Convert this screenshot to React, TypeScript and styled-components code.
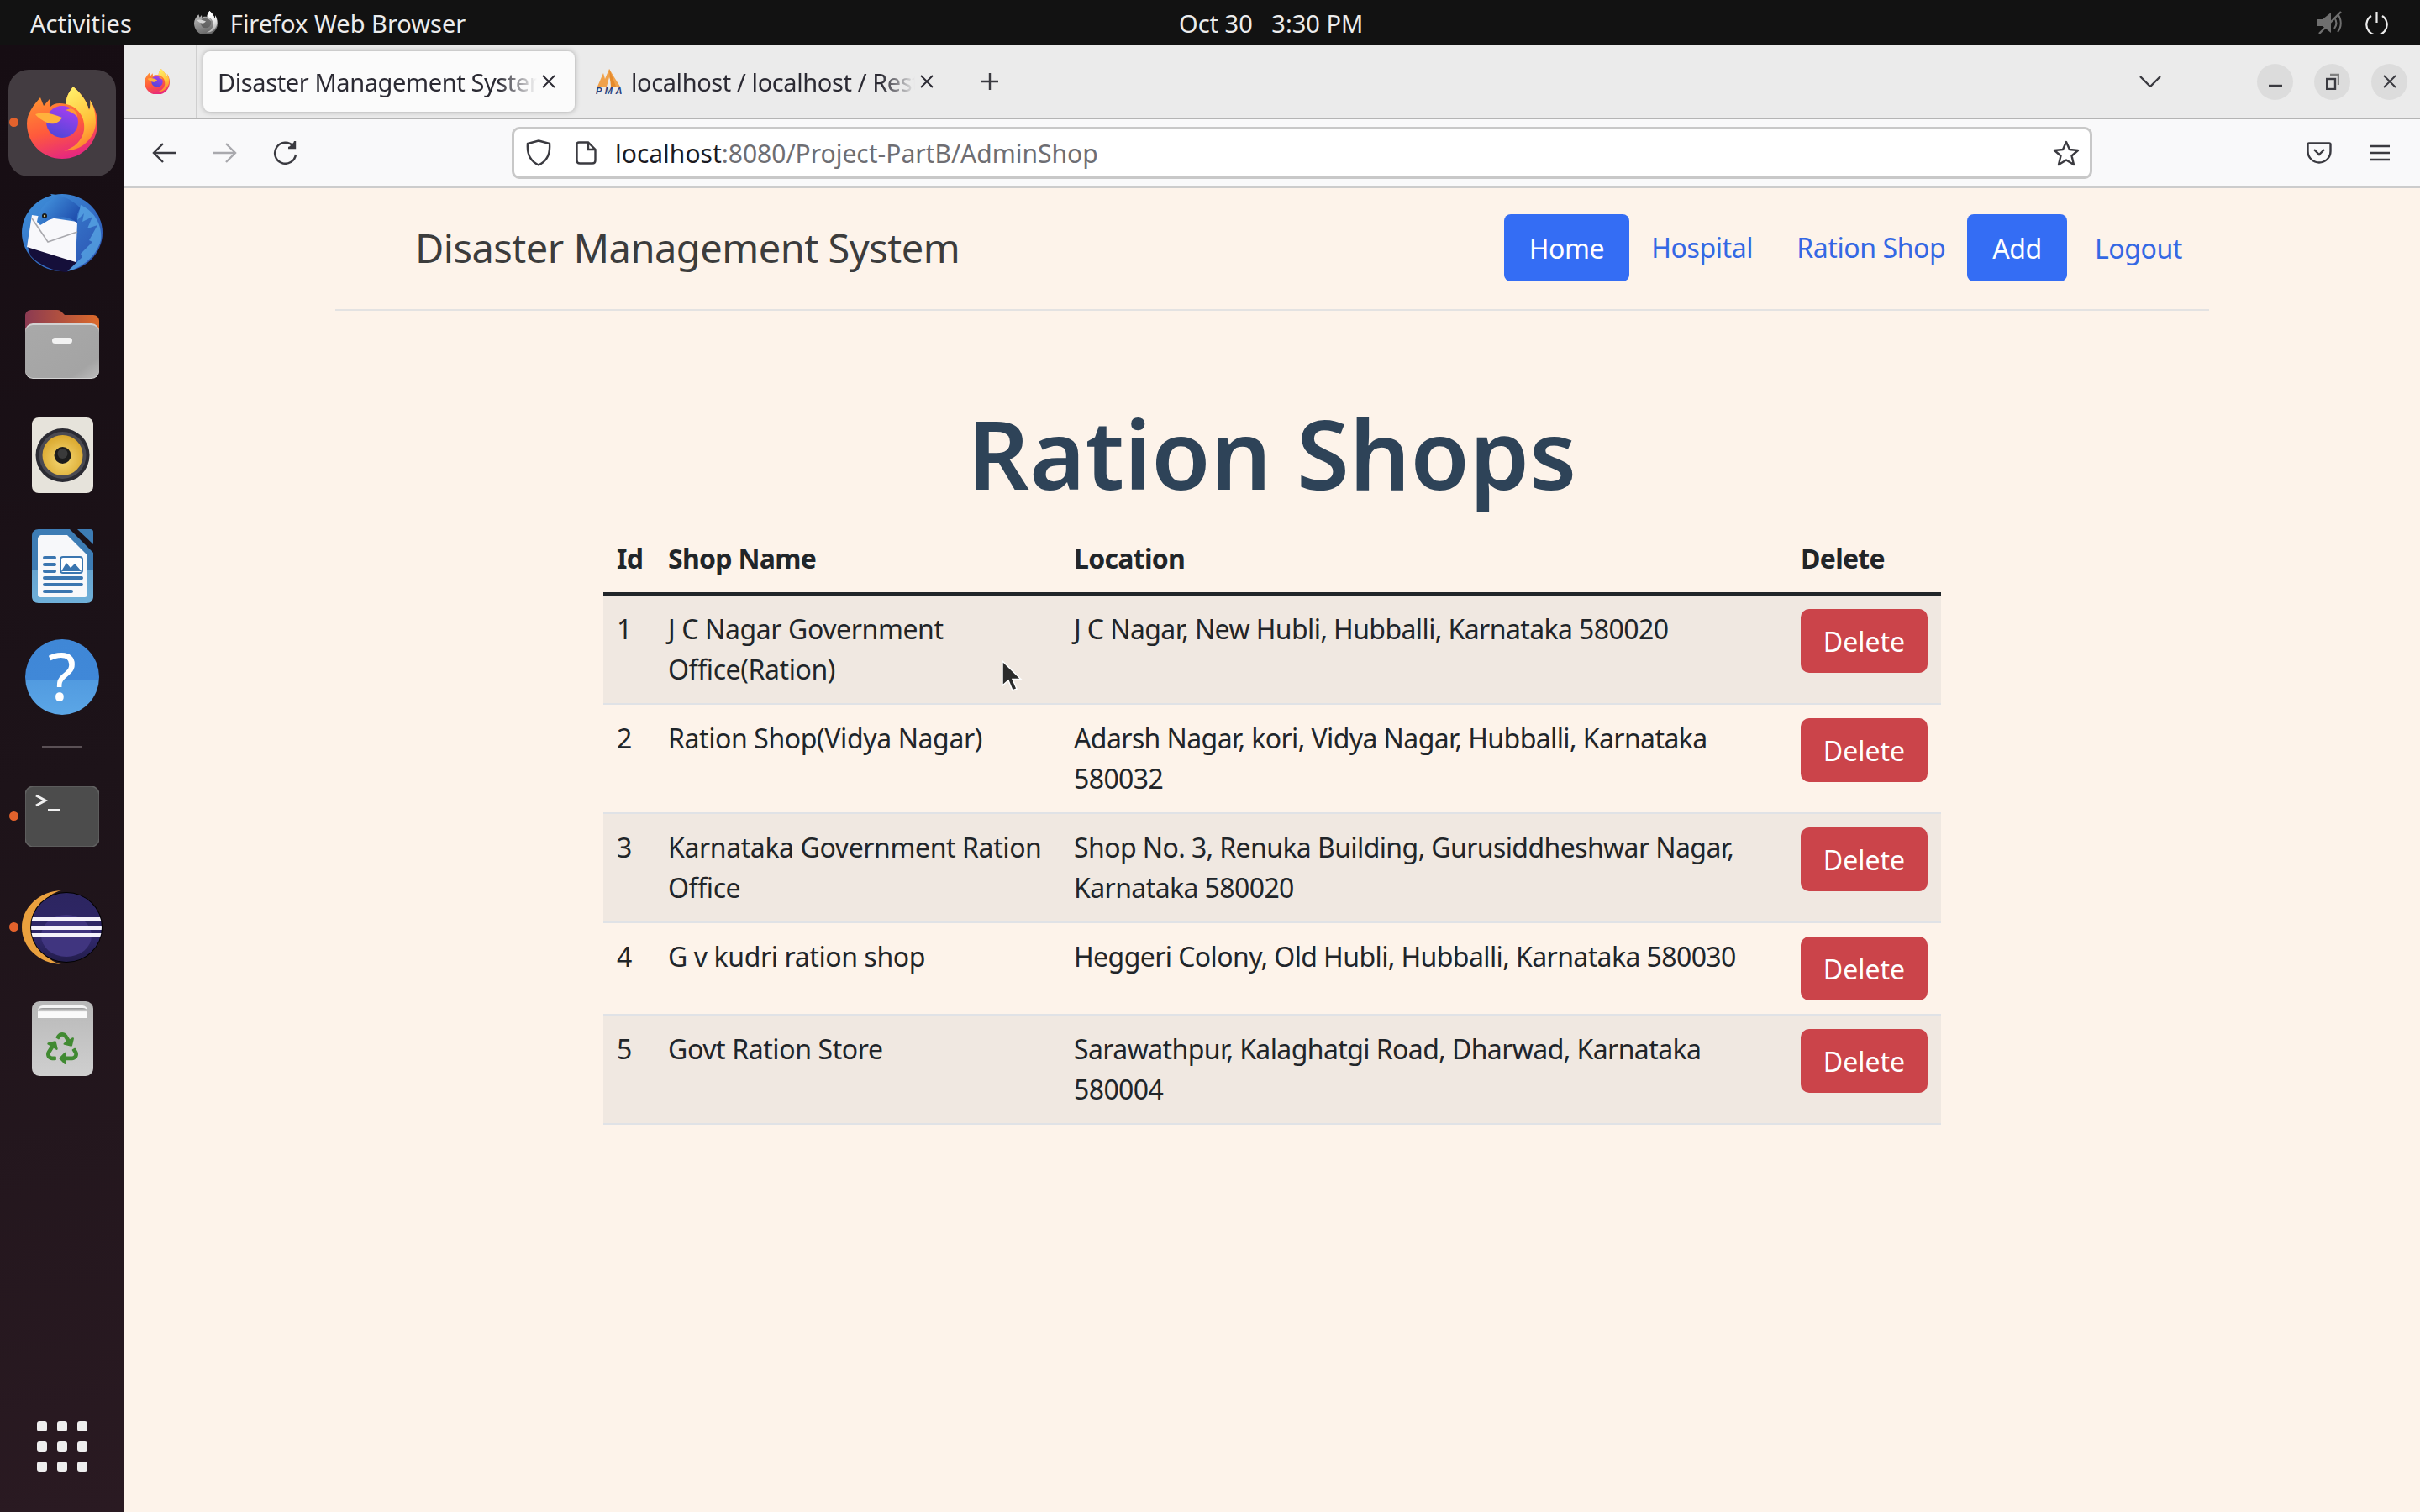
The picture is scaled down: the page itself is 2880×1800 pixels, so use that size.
import React from "react";
import styled, { createGlobalStyle } from "styled-components";
import { FaRecycle } from "react-icons/fa";

const UI_FONT = `"Noto Sans", "Open Sans", sans-serif`;

const GlobalStyle = createGlobalStyle`
  html, body {
    margin: 0;
    padding: 0;
    overflow: hidden;
    background: #121212;
    font-family: ${UI_FONT};
  }
  * { box-sizing: border-box; }
`;

const Screen = styled.div`
  position: relative;
  display: flex;
  flex-direction: column;
  width: 2880px;
  height: 1800px;
  overflow: hidden;
`;

/* ---------- gnome top bar ---------- */

const TopBar = styled.header`
  display: flex;
  align-items: center;
  flex: 0 0 54px;
  background: #121212;
  color: #ececec;
  font-size: 29px;
`;

const TopLeft = styled.div`
  display: flex;
  align-items: center;
  flex: 0 0 1403px;
  padding-left: 36px;
`;

const AppName = styled.div`
  display: flex;
  align-items: center;
  gap: 15px;
  margin-left: 74px;
`;

const Clock = styled.div`
  white-space: pre;
`;

const TopRight = styled.div`
  display: flex;
  align-items: center;
  gap: 27px;
  margin-left: auto;
  padding-right: 38px;
`;

/* ---------- dock ---------- */

const Main = styled.div`
  display: flex;
  flex: 1;
  min-height: 0;
`;

const Dock = styled.nav`
  display: flex;
  flex-direction: column;
  flex: 0 0 148px;
  padding: 26px 0 48px;
  background: linear-gradient(170deg, #160d13 0%, #1d1319 50%, #2a1a22 100%);
`;

const DockSlot = styled.div<{ $h?: number }>`
  position: relative;
  display: flex;
  align-items: center;
  justify-content: center;
  height: ${(p) => p.$h ?? 132}px;
`;

const ActiveTile = styled.div`
  display: flex;
  align-items: center;
  justify-content: center;
  width: 128px;
  height: 127px;
  border-radius: 24px;
  background: #433c41;
`;

const RunDot = styled.span`
  position: absolute;
  left: 11px;
  top: 60px;
  width: 11px;
  height: 11px;
  border-radius: 50%;
  background: #e2622c;
`;

const DockRule = styled.div`
  width: 48px;
  height: 2px;
  background: #5a5055;
`;

const AppGrid = styled.div`
  display: grid;
  grid-template-columns: repeat(3, 12px);
  gap: 12px;
  justify-content: center;
  margin-top: auto;
`;

const AppGridDot = styled.span`
  width: 12px;
  height: 12px;
  border-radius: 3px;
  background: #eeeeee;
`;

const TrashTile = styled.div`
  position: relative;
  display: flex;
  align-items: flex-end;
  justify-content: center;
  width: 73px;
  height: 89px;
  padding-bottom: 14px;
  border-radius: 9px;
  background: linear-gradient(#b8b8b8, #cfcfcf);
  color: #418a32;
  font-size: 38px;
`;

const TrashSlot = styled.div`
  position: absolute;
  left: 7px;
  right: 7px;
  top: 5px;
  height: 15px;
  border-radius: 6px 6px 0 0;
  background: linear-gradient(#8f8f8f, #fafafa 40%);
  border-top: 3px solid #f4f4f4;
`;

/* ---------- browser chrome ---------- */

const Browser = styled.div`
  display: flex;
  flex-direction: column;
  flex: 1;
  min-width: 0;
`;

const TabStrip = styled.div`
  display: flex;
  align-items: center;
  flex: 0 0 88px;
  background: #ebebeb;
  border-bottom: 2px solid #b4b4b4;
`;

const ViewButton = styled.div`
  display: flex;
  align-items: center;
  justify-content: center;
  align-self: stretch;
  flex: 0 0 87px;
  padding-right: 8px;
  border-right: 2px solid #cfcfcf;
`;

const Tab = styled.div<{ $active?: boolean }>`
  display: flex;
  align-items: center;
  height: 72px;
  margin-left: ${(p) => (p.$active ? 7 : 0)}px;
  width: ${(p) => (p.$active ? 442 : 427)}px;
  padding: ${(p) => (p.$active ? "0 23px 0 17px" : "0 0 0 25px")};
  border-radius: 8px;
  background: ${(p) => (p.$active ? "#fbfbfb" : "transparent")};
  box-shadow: ${(p) => (p.$active ? "0 0 6px rgba(0, 0, 0, 0.3)" : "none")};
  color: #2b2a33;
  font-size: 29px;
  letter-spacing: -0.4px;
`;

const TabTitle = styled.span`
  flex: 1;
  min-width: 0;
  margin-right: 6px;
  overflow: hidden;
  white-space: nowrap;
  mask-image: linear-gradient(to right, #000 88%, transparent 100%);
`;

const TabIcon = styled.span`
  display: flex;
  margin-right: 11px;
`;

const StripSpacer = styled.div`
  flex: 1;
`;

const WindowButtons = styled.div`
  display: flex;
  align-items: center;
  gap: 25px;
  padding-right: 15px;
  margin-left: 114px;
`;

const WindowButton = styled.div`
  display: flex;
  align-items: center;
  justify-content: center;
  width: 43px;
  height: 43px;
  border-radius: 50%;
  background: #dcdcdc;
`;

const Toolbar = styled.div`
  display: flex;
  align-items: center;
  flex: 0 0 82px;
  padding-left: 33px;
  background: #f9f9fa;
  border-bottom: 2px solid #cccccc;
`;

const ToolIcons = styled.div`
  display: flex;
  align-items: center;
  gap: 43px;
  width: 428px;
`;

const UrlBar = styled.div`
  display: flex;
  align-items: center;
  width: 1881px;
  height: 62px;
  padding: 0 12px 0 14px;
  background: #ffffff;
  border: 3px solid #c8c8c8;
  border-radius: 9px;
  font-size: 30px;
  color: #6e6e73;
`;

const UrlHost = styled.span`
  color: #1c1b22;
`;

const UrlText = styled.div`
  flex: 1;
  margin-left: 22px;
`;

const ToolRight = styled.div`
  display: flex;
  align-items: center;
  gap: 45px;
  margin-left: 255px;
`;

/* ---------- page ---------- */

const Page = styled.main`
  flex: 1;
  min-height: 0;
  background: #fdf3ea;
  color: #212529;
`;

const NavBar = styled.div`
  display: flex;
  align-items: center;
  justify-content: space-between;
  width: 2230px;
  height: 146px;
  margin: 0 auto;
  padding: 0 6px 2px 95px;
  border-bottom: 2px solid #e3e2e2;
`;

const Brand = styled.div`
  font-size: 47px;
  letter-spacing: -0.5px;
  color: #3c3c3c;
`;

const NavItems = styled.div`
  display: flex;
  align-items: center;
  font-size: 32px;
  letter-spacing: -0.4px;
`;

const NavButton = styled.a`
  display: flex;
  align-items: center;
  height: 80px;
  padding: 0 30px;
  border-radius: 8px;
  background: #346df4;
  color: #ffffff;
`;

const NavLink = styled.a<{ $raised?: boolean; $spaced?: boolean }>`
  display: block;
  padding: 0 26px;
  margin-top: ${(p) => (p.$raised ? -2 : 0)}px;
  margin-left: ${(p) => (p.$spaced ? 7 : 0)}px;
  color: #3468e4;
`;

const Content = styled.section`
  display: flex;
  flex-direction: column;
  align-items: center;
`;

const Title = styled.h1`
  margin: 102px 0 19px;
  font-size: 114px;
  font-weight: 600;
  line-height: 134px;
  color: #2e4358;
`;

const Table = styled.table`
  width: 1592px;
  table-layout: fixed;
  border-collapse: collapse;
  font-size: 32px;
  line-height: 48px;
  letter-spacing: -0.4px;
`;

const Head = styled.th`
  padding: 16px;
  text-align: left;
  font-weight: 700;
  letter-spacing: -0.7px;
  border-bottom: 4px solid #212529;
`;

const Row = styled.tr<{ $striped?: boolean }>`
  background: ${(p) => (p.$striped ? "#f0e8e1" : "transparent")};
`;

const Cell = styled.td`
  padding: 16px;
  vertical-align: top;
  border-bottom: 2px solid #e0e2e6;
`;

const LocationCell = styled(Cell)`
  letter-spacing: -0.6px;
`;

const DeleteButton = styled.button`
  display: block;
  width: 151px;
  height: 76px;
  padding: 0;
  border: 0;
  border-radius: 10px;
  background: #cb444a;
  color: #ffffff;
  font-family: inherit;
  font-size: 32px;
`;

const Cursor = styled.svg`
  position: absolute;
  left: 1191px;
  top: 786px;
`;

const Muted = styled.span`
  display: flex;
  filter: grayscale(1) brightness(1.15);
`;

/* ---------- drawn icons ---------- */

const FirefoxLogo = ({ size, id }: { size: number; id: string }) => (
  <svg width={size} height={size * (86 / 84)} viewBox="0 0 84 86">
    <defs>
      <linearGradient id={`${id}a`} x1="0.2" y1="0" x2="0.5" y2="1">
        <stop offset="0" stopColor="#ffa02e" />
        <stop offset="0.6" stopColor="#ff5a3c" />
        <stop offset="1" stopColor="#e6287e" />
      </linearGradient>
      <linearGradient id={`${id}b`} x1="0.3" y1="0" x2="0.6" y2="1">
        <stop offset="0" stopColor="#fff06a" />
        <stop offset="0.6" stopColor="#ffc23a" />
        <stop offset="1" stopColor="#ff7b2e" />
      </linearGradient>
      <linearGradient id={`${id}c`} x1="0.7" y1="0" x2="0.3" y2="1">
        <stop offset="0" stopColor="#a73ff0" />
        <stop offset="1" stopColor="#4f46d8" />
      </linearGradient>
    </defs>
    <path
      d="M55 0C49 8 46 14 47 21C38 19 32 20 28 24L27 15L20 23L16 13C8 22 0 32 0 44C0 68 19 86 42 86C66 86 84 67 84 44C84 32 80 24 75 16C76 22 75 26 74 28C71 16 64 8 55 0Z"
      fill={`url(#${id}a)`}
    />
    <path
      d="M55 0C49 8 46 14 47 21C60 24 70 36 68 52C66 64 56 74 44 76C62 78 80 64 82 44C82 32 80 24 75 16C76 22 75 26 74 28C71 16 64 8 55 0Z"
      fill={`url(#${id}b)`}
    />
    <circle cx="42" cy="42" r="19" fill={`url(#${id}c)`} />
    <path d="M10 33C20 29 30 32 42 37C38 44 30 46 24 43C18 40 14 38 10 33Z" fill="#ffb13c" />
    <path d="M52 26C58 28 60 32 60 36C56 32 52 30 46 28Z" fill="#ff9a36" />
  </svg>
);

const ThunderbirdLogo = () => (
  <svg width="96" height="96" viewBox="16 16 96 96">
    <defs>
      <linearGradient id="tbBody" x1="0" y1="0" x2="1" y2="1">
        <stop offset="0" stopColor="#3f93dc" />
        <stop offset="1" stopColor="#2a4fb0" />
      </linearGradient>
      <linearGradient id="tbHead" x1="0" y1="0" x2="1" y2="0.6">
        <stop offset="0" stopColor="#4aa0e6" />
        <stop offset="1" stopColor="#1f4fae" />
      </linearGradient>
    </defs>
    <ellipse cx="64" cy="63" rx="48" ry="46" fill="url(#tbBody)" />
    <path d="M26 90C38 104 60 110 70 110L82 98L22 76Z" fill="#150f3a" />
    <path d="M28 42L82 50L80 98L22 80Z" fill="#f8f8fb" />
    <path d="M28 46L47 74L82 62" fill="none" stroke="#a9a9ae" strokeWidth="1.6" />
    <path d="M34 50C36 36 44 26 54 22L50 17C62 18 74 22 86 34C80 40 82 48 82 52C74 44 62 42 48 48L38 54Z" fill="url(#tbHead)" />
    <path d="M82 48L90 40L88 50L100 44L94 58L106 54L96 72L100 74L86 88L88 92L70 109C84 106 104 94 110 72C112 56 104 38 86 30Z" fill="#5aa8e6" opacity="0.75" />
    <circle cx="43" cy="43" r="3" fill="#1a1a1a" />
    <circle cx="43" cy="43" r="1.2" fill="#c8c080" />
  </svg>
);

const FilesIcon = () => (
  <svg width="88" height="82" viewBox="0 0 88 82">
    <defs>
      <linearGradient id="filesTop" x1="0" y1="0" x2="1" y2="0">
        <stop offset="0" stopColor="#8b3a52" />
        <stop offset="1" stopColor="#dc6a2a" />
      </linearGradient>
      <linearGradient id="filesFront" x1="0" y1="0" x2="1" y2="1">
        <stop offset="0" stopColor="#a9a9a9" />
        <stop offset="0.8" stopColor="#a4a4a4" />
        <stop offset="1" stopColor="#bdbdbd" />
      </linearGradient>
    </defs>
    <path d="M0 30V7C0 3 3 0 7 0H38C41 0 42 1 44 3L47 6H81C85 6 88 9 88 13V30Z" fill="url(#filesTop)" />
    <rect y="16" width="88" height="66" rx="9" fill="#d2d2d2" />
    <rect y="18" width="88" height="63" rx="9" fill="url(#filesFront)" />
    <rect x="32" y="33" width="24" height="7" rx="3.5" fill="#f2f2f2" />
  </svg>
);

const RhythmboxIcon = () => (
  <svg width="73" height="90" viewBox="0 0 73 90">
    <defs>
      <radialGradient id="rbGold" cx="0.5" cy="0.6" r="0.6">
        <stop offset="0" stopColor="#f6d976" />
        <stop offset="1" stopColor="#d9a72c" />
      </radialGradient>
    </defs>
    <rect width="73" height="90" rx="8" fill="#e6e3db" />
    <circle cx="36.5" cy="45" r="32" fill="#2b2b33" />
    <circle cx="36.5" cy="45" r="28" fill="#4a4a52" />
    <circle cx="36.5" cy="45" r="24" fill="url(#rbGold)" />
    <circle cx="36.5" cy="45" r="10" fill="#1c1c1c" />
    <circle cx="36.5" cy="43" r="6" fill="#3a3a3a" />
  </svg>
);

const WriterIcon = () => (
  <svg width="73" height="88" viewBox="17 10 73 88">
    <defs>
      <linearGradient id="wrBody" x1="0" y1="0" x2="0" y2="1">
        <stop offset="0" stopColor="#3d7cb4" />
        <stop offset="0.55" stopColor="#3d7cb4" />
        <stop offset="0.56" stopColor="#67a4cf" />
        <stop offset="1" stopColor="#6fb0d9" />
      </linearGradient>
    </defs>
    <path d="M25 10H62L90 38V90C90 95 87 98 82 98H25C20 98 17 95 17 90V18C17 13 20 10 25 10Z" fill="url(#wrBody)" />
    <path d="M29 17H59L83 41V87C83 90 82 91 79 91H28C25 91 24 90 24 87V22C24 19 26 17 29 17Z" fill="#f7f8fa" />
    <path d="M71 10H86C89 10 90 11 90 14V28Z" fill="#3d7cb4" />
    <g fill="#3a76b0">
      <rect x="30" y="42" width="16" height="4" rx="2" />
      <rect x="30" y="50" width="16" height="4" rx="2" />
      <rect x="30" y="58" width="16" height="4" rx="2" />
      <rect x="30" y="66" width="48" height="4" rx="2" />
      <rect x="30" y="74" width="48" height="4" rx="2" />
      <rect x="30" y="82" width="36" height="4" rx="2" />
    </g>
    <rect x="51" y="43" width="26" height="19" rx="3" fill="#fff" stroke="#3a76b0" strokeWidth="2" />
    <path d="M52 60L58 50L63 56L68 51L76 60Z" fill="#3a76b0" />
  </svg>
);

const HelpIcon = () => (
  <svg width="88" height="90" viewBox="0 0 88 90">
    <defs>
      <linearGradient id="helpBall" x1="0" y1="0" x2="0" y2="1">
        <stop offset="0" stopColor="#3f87d6" />
        <stop offset="0.54" stopColor="#4088d8" />
        <stop offset="0.55" stopColor="#529be0" />
        <stop offset="1" stopColor="#5ba6e6" />
      </linearGradient>
    </defs>
    <ellipse cx="44" cy="45" rx="44" ry="45" fill="url(#helpBall)" />
    <text x="44" y="73" textAnchor="middle" fontFamily="Noto Sans" fontSize="78" fill="#ffffff">?</text>
  </svg>
);

const TerminalIcon = () => (
  <svg width="88" height="72" viewBox="0 0 88 72">
    <rect width="88" height="72" rx="10" fill="#4c4c4c" stroke="#626262" strokeWidth="1.5" />
    <path d="M13 11L24 17L13 23" fill="none" stroke="#f0f0f0" strokeWidth="3" />
    <rect x="27" y="27" width="15" height="3" fill="#f0f0f0" />
  </svg>
);

const EclipseIcon = () => (
  <svg width="96" height="90" viewBox="0 0 96 90">
    <defs>
      <linearGradient id="ecBall" x1="0" y1="0" x2="0" y2="1">
        <stop offset="0" stopColor="#2c2560" />
        <stop offset="0.7" stopColor="#2f2768" />
        <stop offset="1" stopColor="#221c4a" />
      </linearGradient>
      <clipPath id="ecClip">
        <ellipse cx="53" cy="45" rx="42" ry="41" />
      </clipPath>
    </defs>
    <path d="M47 1C20 2 0 22 0 45C0 68 20 88 47 89C28 84 14 66 14 45C14 24 28 6 47 1Z" fill="#e9a03e" />
    <ellipse cx="53" cy="45" rx="43" ry="42" fill="#000000" />
    <ellipse cx="53" cy="45" rx="42" ry="41" fill="url(#ecBall)" />
    <g clipPath="url(#ecClip)">
      <ellipse cx="53" cy="55" rx="30" ry="25" fill="#40357f" />
      <rect x="10" y="33" width="86" height="5" fill="#f4f2fa" />
      <rect x="10" y="43" width="86" height="5" fill="#f4f2fa" />
      <rect x="10" y="52" width="86" height="5" fill="#f4f2fa" />
    </g>
  </svg>
);

const MuteIcon = () => (
  <svg width="30" height="28" viewBox="0 0 30 28">
    <path d="M0 10H6L16 2V26L6 18H0Z" fill="#6f6f6f" />
    <path d="M20 8C23 12 23 17 20 21M24 4C29 10 29 19 24 25" fill="none" stroke="#6f6f6f" strokeWidth="2" />
    <path d="M28 1L2 27" stroke="#6f6f6f" strokeWidth="2.4" />
  </svg>
);

const PowerIcon = () => (
  <svg width="27" height="26" viewBox="0 0 27 26">
    <path d="M7 5A12.2 12.2 0 1 0 20 5" fill="none" stroke="#ececec" strokeWidth="2.2" />
    <path d="M13.5 0V13" stroke="#ececec" strokeWidth="2.2" />
  </svg>
);

const CloseGlyph = ({ size = 16, color = "#2b2a33" }: { size?: number; color?: string }) => (
  <svg width={size} height={size} viewBox="0 0 16 16">
    <path d="M1 1L15 15M15 1L1 15" stroke={color} strokeWidth="2" fill="none" />
  </svg>
);

const PmaIcon = () => (
  <svg width="31" height="30" viewBox="0 0 31 30">
    <path d="M2 21L9 5L11 12L16 0L22 10L29 21H20L16 10L13 21Z" fill="#f0a14a" />
    <path d="M16 0L24 21H18Z" fill="#e58a2c" />
    <text x="0" y="30" fontFamily="Liberation Sans" fontStyle="italic" fontWeight="700" fontSize="11" fill="#27407e" textLength="31">PMA</text>
  </svg>
);

const Stroke = styled.svg<{ $tone?: string; $left?: number }>`
  display: block;
  flex: none;
  margin-left: ${(p) => p.$left ?? 0}px;
  fill: none;
  stroke: ${(p) => p.$tone ?? "#3a3a40"};
  stroke-width: 2.4;
`;

const rows = [
  { id: 1, name: "J C Nagar Government Office(Ration)", location: "J C Nagar, New Hubli, Hubballi, Karnataka 580020" },
  { id: 2, name: "Ration Shop(Vidya Nagar)", location: "Adarsh Nagar, kori, Vidya Nagar, Hubballi, Karnataka 580032" },
  { id: 3, name: "Karnataka Government Ration Office", location: "Shop No. 3, Renuka Building, Gurusiddheshwar Nagar, Karnataka 580020" },
  { id: 4, name: "G v kudri ration shop", location: "Heggeri Colony, Old Hubli, Hubballi, Karnataka 580030" },
  { id: 5, name: "Govt Ration Store", location: "Sarawathpur, Kalaghatgi Road, Dharwad, Karnataka 580004" },
];

export default function App() {
  return (
    <Screen>
      <GlobalStyle />
      <TopBar>
        <TopLeft>
          <span>Activities</span>
          <AppName>
            <Muted>
              <FirefoxLogo size={28} id="ffTop" />
            </Muted>
            <span>Firefox Web Browser</span>
          </AppName>
        </TopLeft>
        <Clock>Oct 30   3:30 PM</Clock>
        <TopRight>
          <MuteIcon />
          <PowerIcon />
        </TopRight>
      </TopBar>
      <Main>
        <Dock>
          <DockSlot>
            <RunDot />
            <ActiveTile>
              <FirefoxLogo size={84} id="ffDock" />
            </ActiveTile>
          </DockSlot>
          <DockSlot><ThunderbirdLogo /></DockSlot>
          <DockSlot><FilesIcon /></DockSlot>
          <DockSlot><RhythmboxIcon /></DockSlot>
          <DockSlot><WriterIcon /></DockSlot>
          <DockSlot><HelpIcon /></DockSlot>
          <DockSlot $h={34}><DockRule /></DockSlot>
          <DockSlot><RunDot /><TerminalIcon /></DockSlot>
          <DockSlot><RunDot /><EclipseIcon /></DockSlot>
          <DockSlot>
            <TrashTile>
              <TrashSlot />
              <FaRecycle />
            </TrashTile>
          </DockSlot>
          <AppGrid>
            {Array.from({ length: 9 }, (_, i) => <AppGridDot key={i} />)}
          </AppGrid>
        </Dock>
        <Browser>
          <TabStrip>
            <ViewButton><FirefoxLogo size={30} id="ffView" /></ViewButton>
            <Tab $active>
              <TabTitle>Disaster Management System</TabTitle>
              <CloseGlyph />
            </Tab>
            <Tab>
              <TabIcon><PmaIcon /></TabIcon>
              <TabTitle>localhost / localhost / Restaurant</TabTitle>
              <CloseGlyph />
            </Tab>
            <Stroke width="26" height="26" viewBox="0 0 26 26" $left={54}>
              <path d="M13 3V23M3 13H23" />
            </Stroke>
            <StripSpacer />
            <Stroke width="26" height="14" viewBox="0 0 26 14">
              <path d="M1 1L13 13L25 1" />
            </Stroke>
            <WindowButtons>
              <WindowButton>
                <Stroke width="16" height="16" viewBox="0 0 16 16"><path d="M0 13H16" /></Stroke>
              </WindowButton>
              <WindowButton>
                <Stroke width="16" height="20" viewBox="0 0 16 20">
                  <rect x="1" y="7" width="10" height="12" />
                  <path d="M5 2H15V14" stroke="#808080" />
                </Stroke>
              </WindowButton>
              <WindowButton><CloseGlyph color="#3a3a40" /></WindowButton>
            </WindowButtons>
          </TabStrip>
          <Toolbar>
            <ToolIcons>
              <Stroke width="29" height="24" viewBox="0 0 29 24">
                <path d="M29 12H2M13 1L2 12L13 23" />
              </Stroke>
              <Stroke width="29" height="24" viewBox="0 0 29 24" $tone="#a9a9ad">
                <path d="M0 12H27M16 1L27 12L16 23" />
              </Stroke>
              <Stroke width="29" height="28" viewBox="0 0 29 28">
                <path d="M24 6A12.5 12.5 0 1 0 27 16" />
                <path d="M26 0V8H18" fill="#3a3a40" />
              </Stroke>
            </ToolIcons>
            <UrlBar>
              <Stroke width="30" height="32" viewBox="0 0 30 32">
                <path d="M15 1.5L28 5C29 17 25 26 15 30.5C5 26 1 17 2 5Z" />
              </Stroke>
              <Stroke width="25" height="28" viewBox="0 0 25 28" $left={29}>
                <path d="M4 1.5H15L23.5 10V23C23.5 25 22 26.5 20 26.5H5C3 26.5 1.5 25 1.5 23V4C1.5 2.5 2.5 1.5 4 1.5ZM15 1.5V10H23.5" />
              </Stroke>
              <UrlText>
                <UrlHost>localhost</UrlHost>:8080/Project-PartB/AdminShop
              </UrlText>
              <Stroke width="32" height="31" viewBox="0 0 32 31">
                <path d="M16 2L20 11L30 12L22.5 18.5L25 29L16 23.5L7 29L9.5 18.5L2 12L12 11Z" strokeLinejoin="round" />
              </Stroke>
            </UrlBar>
            <ToolRight>
              <Stroke width="30" height="26" viewBox="0 0 30 26">
                <path d="M3 1.5H27C28 1.5 28.5 2 28.5 3V11C28.5 19 22 24.5 15 24.5C8 24.5 1.5 19 1.5 11V3C1.5 2 2 1.5 3 1.5Z" />
                <path d="M9 9L15 15L21 9" />
              </Stroke>
              <Stroke width="24" height="20" viewBox="0 0 24 20">
                <path d="M0 2H24M0 10H24M0 18H24" />
              </Stroke>
            </ToolRight>
          </Toolbar>
          <Page>
            <NavBar>
              <Brand>Disaster Management System</Brand>
              <NavItems>
                <NavButton>Home</NavButton>
                <NavLink $raised>Hospital</NavLink>
                <NavLink $raised>Ration Shop</NavLink>
                <NavButton>Add</NavButton>
                <NavLink $spaced>Logout</NavLink>
              </NavItems>
            </NavBar>
            <Content>
              <Title>Ration Shops</Title>
              <Table>
                <colgroup>
                  <col width="61" />
                  <col width="483" />
                  <col width="865" />
                  <col width="183" />
                </colgroup>
                <thead>
                  <tr>
                    <Head>Id</Head>
                    <Head>Shop Name</Head>
                    <Head>Location</Head>
                    <Head>Delete</Head>
                  </tr>
                </thead>
                <tbody>
                  {rows.map((r, i) => (
                    <Row key={r.id} $striped={i % 2 === 0}>
                      <Cell>{r.id}</Cell>
                      <Cell>{r.name}</Cell>
                      <LocationCell>{r.location}</LocationCell>
                      <Cell><DeleteButton>Delete</DeleteButton></Cell>
                    </Row>
                  ))}
                </tbody>
              </Table>
            </Content>
          </Page>
        </Browser>
      </Main>
      <Cursor width="26" height="38" viewBox="0 0 26 38">
        <path d="M2 1V30L9 24L14 36L19 34L14 22.5H24Z" fill="#2b2b2b" stroke="#ffffff" strokeWidth="1.5" />
      </Cursor>
    </Screen>
  );
}
